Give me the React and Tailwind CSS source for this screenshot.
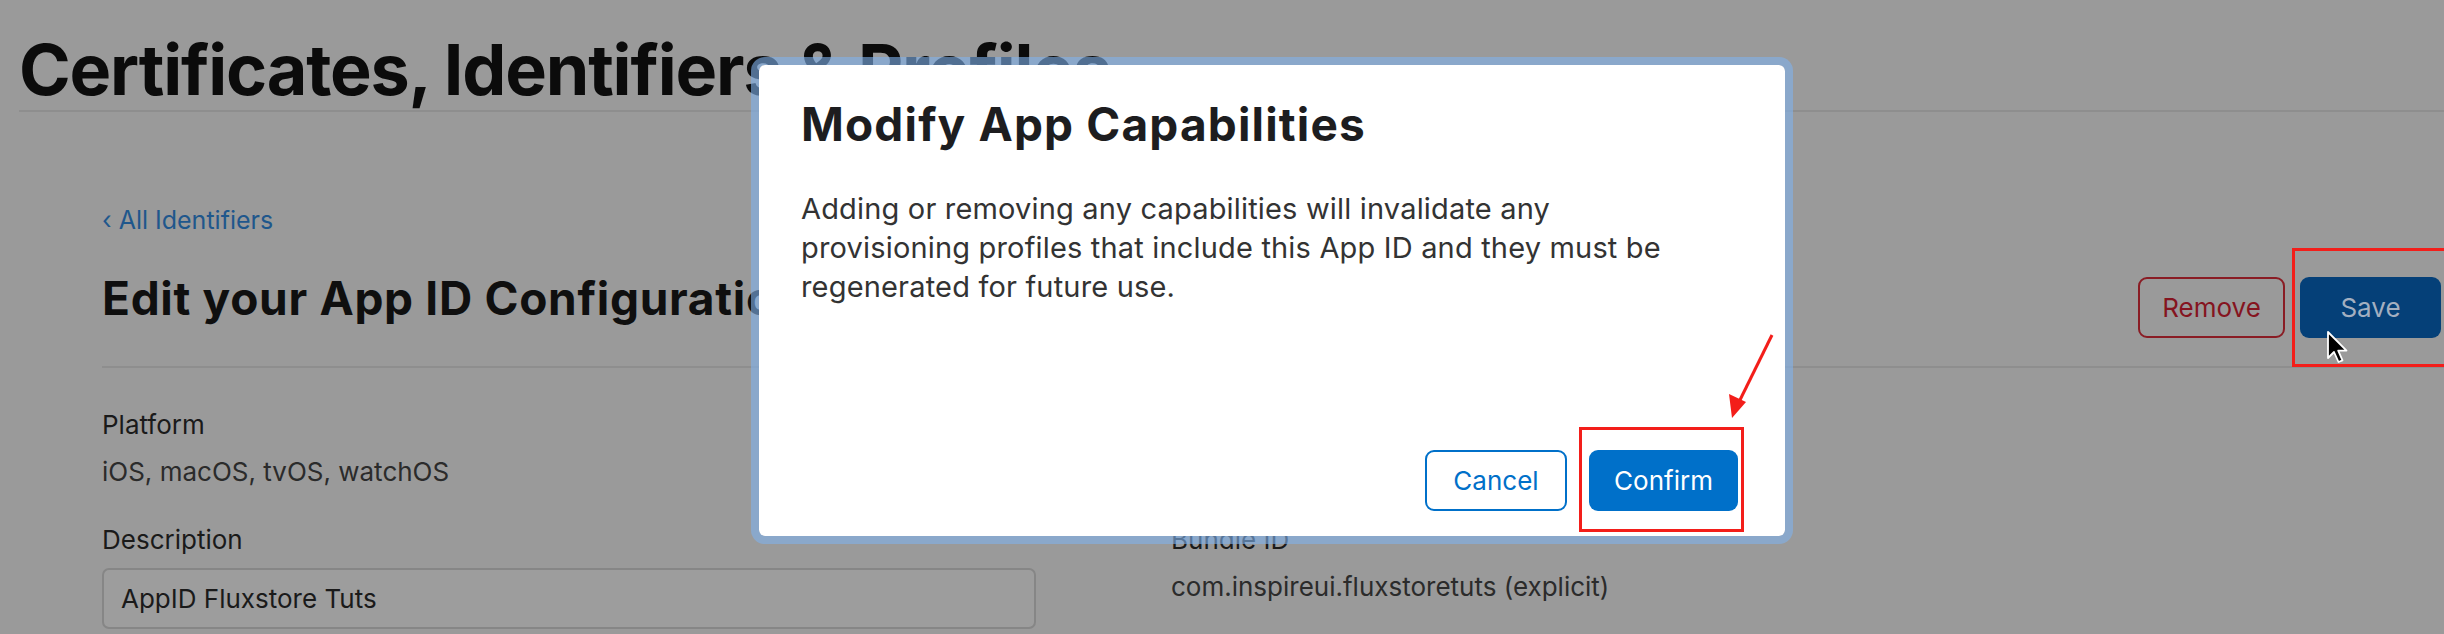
import React from 'react';

// Background page (dimmed by the modal overlay)
const Field = ({ label, children, first }) => (
  <div className={first ? 'mt-[44px]' : 'mt-[42px]'}>
    <div className="text-[26px] leading-none text-[#1a1a1a]">{label}</div>
    {children}
  </div>
);

const Value = ({ children }) => (
  <div className="mt-[21px] text-[26px] leading-none text-[#2b2b2b]">{children}</div>
);

const Page = () => (
  <div>
    <div className="pl-[19px] pt-[35px]">
      <h1 className="text-[70px] leading-none font-bold tracking-[-0.017em] text-[#0b0b0b] whitespace-nowrap">
        Certificates, Identifiers &amp; Profiles
      </h1>
      <div className="mt-[5px] h-[2px] bg-[#8e8e8e]" />
    </div>

    <div className="pl-[102px]">
      <div className="mt-[96px] text-[25px] leading-none text-[#1f578c]">‹ All Identifiers</div>

      <div className="mt-[43px] flex items-start justify-between pr-[3px]">
        <h2 className="mt-[-1px] text-[46px] leading-none font-bold tracking-[0.015em] text-[#0f0f0f] whitespace-nowrap">
          Edit your App ID Configuration
        </h2>
        <div className="mt-[1px] flex gap-[15px]">
          <button className="w-[147px] h-[61px] rounded-[9px] border-2 border-[#8a1c24] text-[26px] text-[#85141f]">
            Remove
          </button>
          <button className="w-[141px] h-[61px] rounded-[9px] bg-[#054078] text-[26px] text-[#a3afc0]">
            Save
          </button>
        </div>
      </div>

      <div className="mt-[28px] h-[2px] bg-[#8e8e8e]" />

      <div className="grid grid-cols-[1069px_1fr]">
        <div className="flex flex-col">
          <Field label="Platform" first>
            <Value>iOS, macOS, tvOS, watchOS</Value>
          </Field>
          <Field label="Description">
            <div className="mt-[15px] w-[934px] h-[61px] rounded-[7px] border-2 border-[#868686] bg-[#9d9d9d] px-[17px] flex items-center text-[26px] text-[#1a1a1a]">
              AppID Fluxstore Tuts
            </div>
          </Field>
        </div>
        <div className="flex flex-col">
          <Field label="App ID Prefix" first>
            <Value>N8XP4K2Q7L (Team ID)</Value>
          </Field>
          <Field label="Bundle ID">
            <Value>com.inspireui.fluxstoretuts (explicit)</Value>
          </Field>
        </div>
      </div>
    </div>
  </div>
);

const Modal = () => (
  <div className="absolute left-[751px] top-[57px] w-[1042px] h-[487px] rounded-[14px] border-[8px] border-[rgba(129,179,237,0.6)] bg-white bg-clip-padding flex flex-col pl-[42px] pr-[47px] pb-[25px]">
    <h3 className="mt-[36px] text-[46px] leading-none font-bold tracking-[0.025em] text-[#1d1d1f] whitespace-nowrap">
      Modify App Capabilities
    </h3>
    <p className="mt-[42px] text-[29px] leading-[39px] tracking-[0.006em] text-[#333333] whitespace-nowrap">
      Adding or removing any capabilities will invalidate any
      <br />
      provisioning profiles that include this App ID and they must be
      <br />
      regenerated for future use.
    </p>
    <div className="mt-auto flex justify-end gap-[22px]">
      <button className="w-[142px] h-[61px] rounded-[9px] border-2 border-[#0070c9] bg-white text-[26px] text-[#0070c9]">
        Cancel
      </button>
      <button className="w-[149px] h-[61px] rounded-[9px] bg-[#0070c9] text-[26px] text-white">
        Confirm
      </button>
    </div>
  </div>
);

export default function App() {
  return (
    <div className="relative w-[2444px] h-[634px] overflow-hidden bg-[#9a9a9a] font-['Inter',sans-serif]">
      <Page />
      <Modal />

      {/* annotation boxes */}
      <div className="absolute left-[1579px] top-[427px] w-[165px] h-[105px] border-[3px] border-[#f31e1a]" />
      <div className="absolute left-[2292px] top-[248px] w-[170px] h-[119px] border-[3px] border-[#f31e1a]" />

      {/* red arrow */}
      <svg className="absolute left-[1710px] top-[330px]" width="80" height="95" viewBox="0 0 80 95">
        <line x1="62" y1="5" x2="28" y2="74" stroke="#f31e1a" strokeWidth="3" />
        <polygon points="22,88 19,64 36,72" fill="#f31e1a" />
      </svg>

      {/* mouse cursor */}
      <svg className="absolute left-[2326px] top-[330px]" width="26" height="36" viewBox="0 0 26 36">
        <path
          d="M2 2 L2 28 L8 22 L12.5 32 L16.5 30.3 L12.2 20.6 L20.5 20.6 Z"
          fill="#000"
          stroke="#fff"
          strokeWidth="1.8"
          strokeLinejoin="round"
        />
      </svg>
    </div>
  );
}
